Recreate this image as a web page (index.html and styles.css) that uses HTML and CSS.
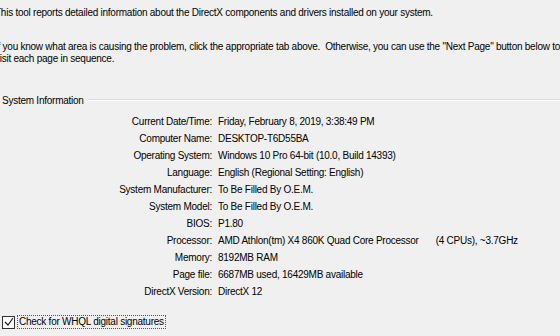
FILE: index.html
```html
<!DOCTYPE html>
<html>
<head>
  <meta charset="UTF-8">
  <title>DirectX Diagnostic Tool</title>
  <link rel="stylesheet" href="styles.css">
</head>
<body>
  <div id="intro">
    <p class="line-first">This tool reports detailed information about the DirectX components and drivers installed on your system.</p>
    <p>If you know what area is causing the problem, click the appropriate tab above.&nbsp; Otherwise, you can use the "Next Page" button below to visit each page in sequence.</p>
  </div>

  <div class="group">
    <div class="group-title">
      <span>System Information</span>
      <div class="group-rule"></div>
    </div>
    <div class="info">
      <div class="key">Current Date/Time:</div><div class="val">Friday, February 8, 2019, 3:38:49 PM</div>
      <div class="key">Computer Name:</div><div class="val">DESKTOP-T6D55BA</div>
      <div class="key">Operating System:</div><div class="val">Windows 10 Pro 64-bit (10.0, Build 14393)</div>
      <div class="key">Language:</div><div class="val">English (Regional Setting: English)</div>
      <div class="key">System Manufacturer:</div><div class="val">To Be Filled By O.E.M.</div>
      <div class="key">System Model:</div><div class="val">To Be Filled By O.E.M.</div>
      <div class="key">BIOS:</div><div class="val">P1.80</div>
      <div class="key">Processor:</div><div class="val">AMD Athlon(tm) X4 860K Quad Core Processor<span class="cpus">(4 CPUs), ~3.7GHz</span></div>
      <div class="key">Memory:</div><div class="val">8192MB RAM</div>
      <div class="key">Page file:</div><div class="val">6687MB used, 16429MB available</div>
      <div class="key">DirectX Version:</div><div class="val">DirectX 12</div>
    </div>
  </div>

  <label class="whql">
    <span class="box">
      <svg width="10" height="10" viewBox="0 0 10 10"><path d="M1 5 L4 8 L9 1" fill="none" stroke="#222" stroke-width="1.2"/></svg>
    </span>
    <span class="whql-text">Check for WHQL digital signatures</span>
  </label>
</body>
</html>
```

FILE: styles.css
```css
body {
  background: #f0f0f0;
  color: #000;
  font-family: "Liberation Sans", Arial, sans-serif;
  font-size: 10px;
  letter-spacing: -0.25px;
  margin: 0;
  padding: 0;
  overflow: hidden;
}
#intro {
  margin-left: -5px;
  padding-top: 7px;
  width: 572px;
}
#intro p {
  margin: 0;
  line-height: 12px;
}
#intro .line-first {
  margin-bottom: 22px;
}
.group {
  margin-top: 29px;
}
.group-title {
  display: flex;
  align-items: center;
  gap: 4px;
  padding-left: 2px;
  height: 12px;
}
.group-rule {
  flex: 1;
  border-top: 1px solid #dcdcdc;
  border-bottom: 1px solid #fff;
}
.info {
  display: grid;
  grid-template-columns: 218px auto;
  grid-auto-rows: 17px;
  margin-top: 7px;
  line-height: 17px;
}
.key {
  text-align: right;
  padding-right: 6px;
}
.cpus {
  margin-left: 17px;
}
.whql {
  display: flex;
  align-items: center;
  margin-top: 15px;
  padding-left: 2px;
}
.box {
  width: 11px;
  height: 11px;
  border: 1px solid #333;
  background: #fff;
  display: flex;
  align-items: center;
  justify-content: center;
}
.whql-text {
  margin-left: 2px;
  border: 1px dotted #555;
  padding: 0 1px;
  line-height: 12px;
}
```
